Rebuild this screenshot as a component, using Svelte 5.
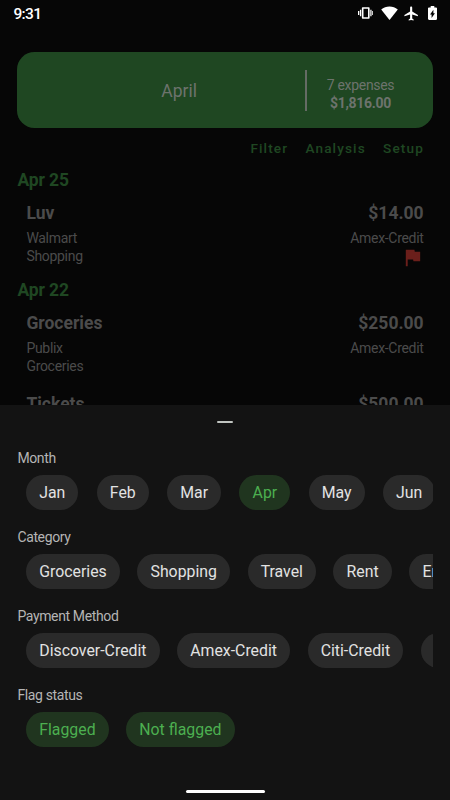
<script>
  const tabs = ['Filter', 'Analysis', 'Setup'];

  const days = [
    {
      date: 'Apr 25',
      items: [
        { name: 'Luv', amount: '$14.00', place: 'Walmart', category: 'Shopping', method: 'Amex-Credit', flagged: true }
      ]
    },
    {
      date: 'Apr 22',
      items: [
        { name: 'Groceries', amount: '$250.00', place: 'Publix', category: 'Groceries', method: 'Amex-Credit' },
        { name: 'Tickets', amount: '$500.00' }
      ]
    }
  ];

  const groups = [
    { label: 'Month', chips: ['Jan', 'Feb', 'Mar', 'Apr', 'May', 'Jun'], selected: ['Apr'], wide: true },
    { label: 'Category', chips: ['Groceries', 'Shopping', 'Travel', 'Rent', 'Entertainment'], selected: [] },
    { label: 'Payment Method', chips: ['Discover-Credit', 'Amex-Credit', 'Citi-Credit', ''], selected: [] },
    { label: 'Flag status', chips: ['Flagged', 'Not flagged'], selected: ['Flagged', 'Not flagged'] }
  ];
</script>

<div class="phone">
  <header class="status">
    <span class="time">9:31</span>
    <div class="icons">
      <svg width="15.5" height="16" viewBox="0 0 24 24"><path d="M0 15h2V9H0v6zm3 2h2V7H3v10zm19-8v6h2V9h-2zm-3 8h2V7h-2v10zM16.5 3h-9C6.67 3 6 3.67 6 4.5v15c0 .83.67 1.5 1.5 1.5h9c.83 0 1.5-.67 1.5-1.500v-15c0-.83-.67-1.5-1.5-1.500zM15.500 18.500H8.500V5.500h7v13z" /></svg>
      <svg class="wifi" width="17" height="14" viewBox="0 0 17 14"><path d="M8.500 13.900 .2 3.500C2.500 1.500 5.400.4 8.500.4s6 1.100 8.300 3.100z" /></svg>
      <svg class="plane" width="17" height="17" viewBox="0 0 24 24"><path d="M21 16v-2l-8-5V3.500c0-.83-.67-1.500-1.500-1.500S10 2.670 10 3.500V9l-8 5v2l8-2.500V19l-2 1.500V22l3.500-1 3.500 1v-1.500L13 19v-5.500l8 2.500z" /></svg>
      <svg class="battery" width="9" height="14" viewBox="7 2 10 20" preserveAspectRatio="none"><path d="M15.670 4H14V2h-4v2H8.330C7.600 4 7 4.600 7 5.330v15.330C7 21.400 7.600 22 8.330 22h7.330c.74 0 1.340-.6 1.340-1.330V5.330C17 4.600 16.400 4 15.670 4zM11 19v-5H9.300L13 7.500v5h1.700L11 19z" /></svg>
    </div>
  </header>

  <main>
    <section class="summary">
      <div class="month">April</div>
      <div class="totals">
        <span>7 expenses</span>
        <strong>$1,816.00</strong>
      </div>
    </section>

    <nav>
      {#each tabs as tab}<span>{tab}</span>{/each}
    </nav>

    {#each days as day}
      <section class="day">
        <h2>{day.date}</h2>
        {#each day.items as item}
          <article>
            <div class="row title"><span>{item.name}</span><span>{item.amount}</span></div>
            {#if item.place}
              <div class="row sub">
                <div>{item.place}<br />{item.category}</div>
                <div class="right">
                  {item.method}
                  {#if item.flagged}
                    <svg class="flag" width="23" height="23" viewBox="0 0 24 24"><path d="M14.400 6 14 4H5v17h2v-7h5.600l.4 2h7V6z" /></svg>
                  {/if}
                </div>
              </div>
            {/if}
          </article>
        {/each}
      </section>
    {/each}
  </main>

  <section class="sheet">
    <div class="handle"></div>
    {#each groups as group}
      <div class="group">
        <h3>{group.label}</h3>
        <div class="chips" class:wide={group.wide}>
          {#each group.chips as chip}
            <span class="chip" class:selected={group.selected.includes(chip)}>{chip}</span>
          {/each}
        </div>
      </div>
    {/each}
    <div class="home"></div>
  </section>
</div>

<style>
  :global(body) { background: #060606; }
  .phone {
    width: 450px;
    height: 800px;
    display: flex;
    flex-direction: column;
    overflow: hidden;
    background: #060606;
    font-family: Roboto, sans-serif;
  }
  .status {
    flex: none;
    height: 27px;
    padding: 0 13px 0 13.400px;
    box-sizing: border-box;
    display: flex;
    align-items: center;
    justify-content: space-between;
    color: #fff;
  }
  .time { font-size: 15.500px; font-weight: 500; line-height: 26px; letter-spacing: -0.600px; padding-top: 1px; }
  .icons { display: flex; align-items: center; fill: #fff; margin-top: -1px; }
  .wifi { margin-left: 7.500px; }
  .plane { margin-left: 5.500px; }
  .battery { margin-left: 8px; }

  main {
    flex: none;
    height: 378px;
    padding: 25.400px 17.400px 0;
    box-sizing: border-box;
    overflow: hidden;
  }
  .summary {
    height: 75.300px;
    border-radius: 17.500px;
    background: #1f4722;
    color: #6d736d;
    display: flex;
    align-items: center;
  }
  .month {
    width: 287.500px;
    padding-left: 36px;
    padding-top: 2px;
    box-sizing: border-box;
    text-align: center;
    font-size: 17.500px;
  }
  .totals {
    flex: 1;
    height: 41px;
    border-left: 2px solid #656b65;
    display: flex;
    flex-direction: column;
    align-items: center;
    justify-content: center;
    padding-right: 18.500px;
    padding-top: 7px;
    box-sizing: border-box;
    font-size: 14px;
    letter-spacing: -0.300px;
    line-height: 18px;
  }
  nav {
    height: 40.500px;
    display: flex;
    justify-content: flex-end;
    gap: 17.300px;
    padding-right: 8.700px;
    line-height: 41px;
    font-size: 13.600px;
    font-weight: 500;
    letter-spacing: 1.120px;
    color: #1f4722;
  }
  .day { padding-bottom: 4.800px; }
  h2 {
    margin: 0;
    height: 24px;
    line-height: 24px;
    font-size: 17.500px;
    letter-spacing: -0.100px;
    font-weight: 700;
    color: #1f4722;
  }
  article { padding: 9px 9px 8px; }
  .row { display: flex; justify-content: space-between; }
  .title { height: 25px; line-height: 25px; font-size: 17.500px; font-weight: 700; color: #4b4b4b; }
  .sub { height: 36px; margin-top: 3px; line-height: 18px; font-size: 14px; letter-spacing: -0.300px; color: #4b4b4b; }
  .right { display: flex; flex-direction: column; align-items: flex-end; }
  .flag { fill: #6b1f1b; margin-top: -1px; flex: none; }

  .sheet {
    flex: 1;
    padding: 0 17.400px;
    background: #131313;
    display: flex;
    flex-direction: column;
  }
  .handle {
    flex: none;
    width: 16px;
    height: 2px;
    border-radius: 1px;
    margin: 16px auto 25px;
    background: #c0c4c0;
  }
  .group { flex: none; height: 79.100px; }
  h3 {
    margin: 0;
    height: 27px;
    line-height: 20px;
    font-size: 14px;
    letter-spacing: -0.370px;
    font-weight: 400;
    color: #b5b5b5;
  }
  .chips {
    display: flex;
    gap: 17.500px;
    padding-left: 8.750px;
    overflow: hidden;
  }
  .wide { gap: 18.300px; }
  .chip {
    flex: none;
    box-sizing: border-box;
    height: 35px;
    min-width: 40px;
    line-height: 35px;
    padding: 0 13.100px;
    border-radius: 17.500px;
    background: #2a2a2a;
    color: #e2e2e2;
    font-size: 15.850px;
    white-space: nowrap;
  }
  .selected { background: #20351f; color: #4caf50; }
  .home {
    flex: none;
    width: 79px;
    height: 3px;
    border-radius: 2px;
    background: #fff;
    margin: 25.500px auto 0;
  }
</style>
